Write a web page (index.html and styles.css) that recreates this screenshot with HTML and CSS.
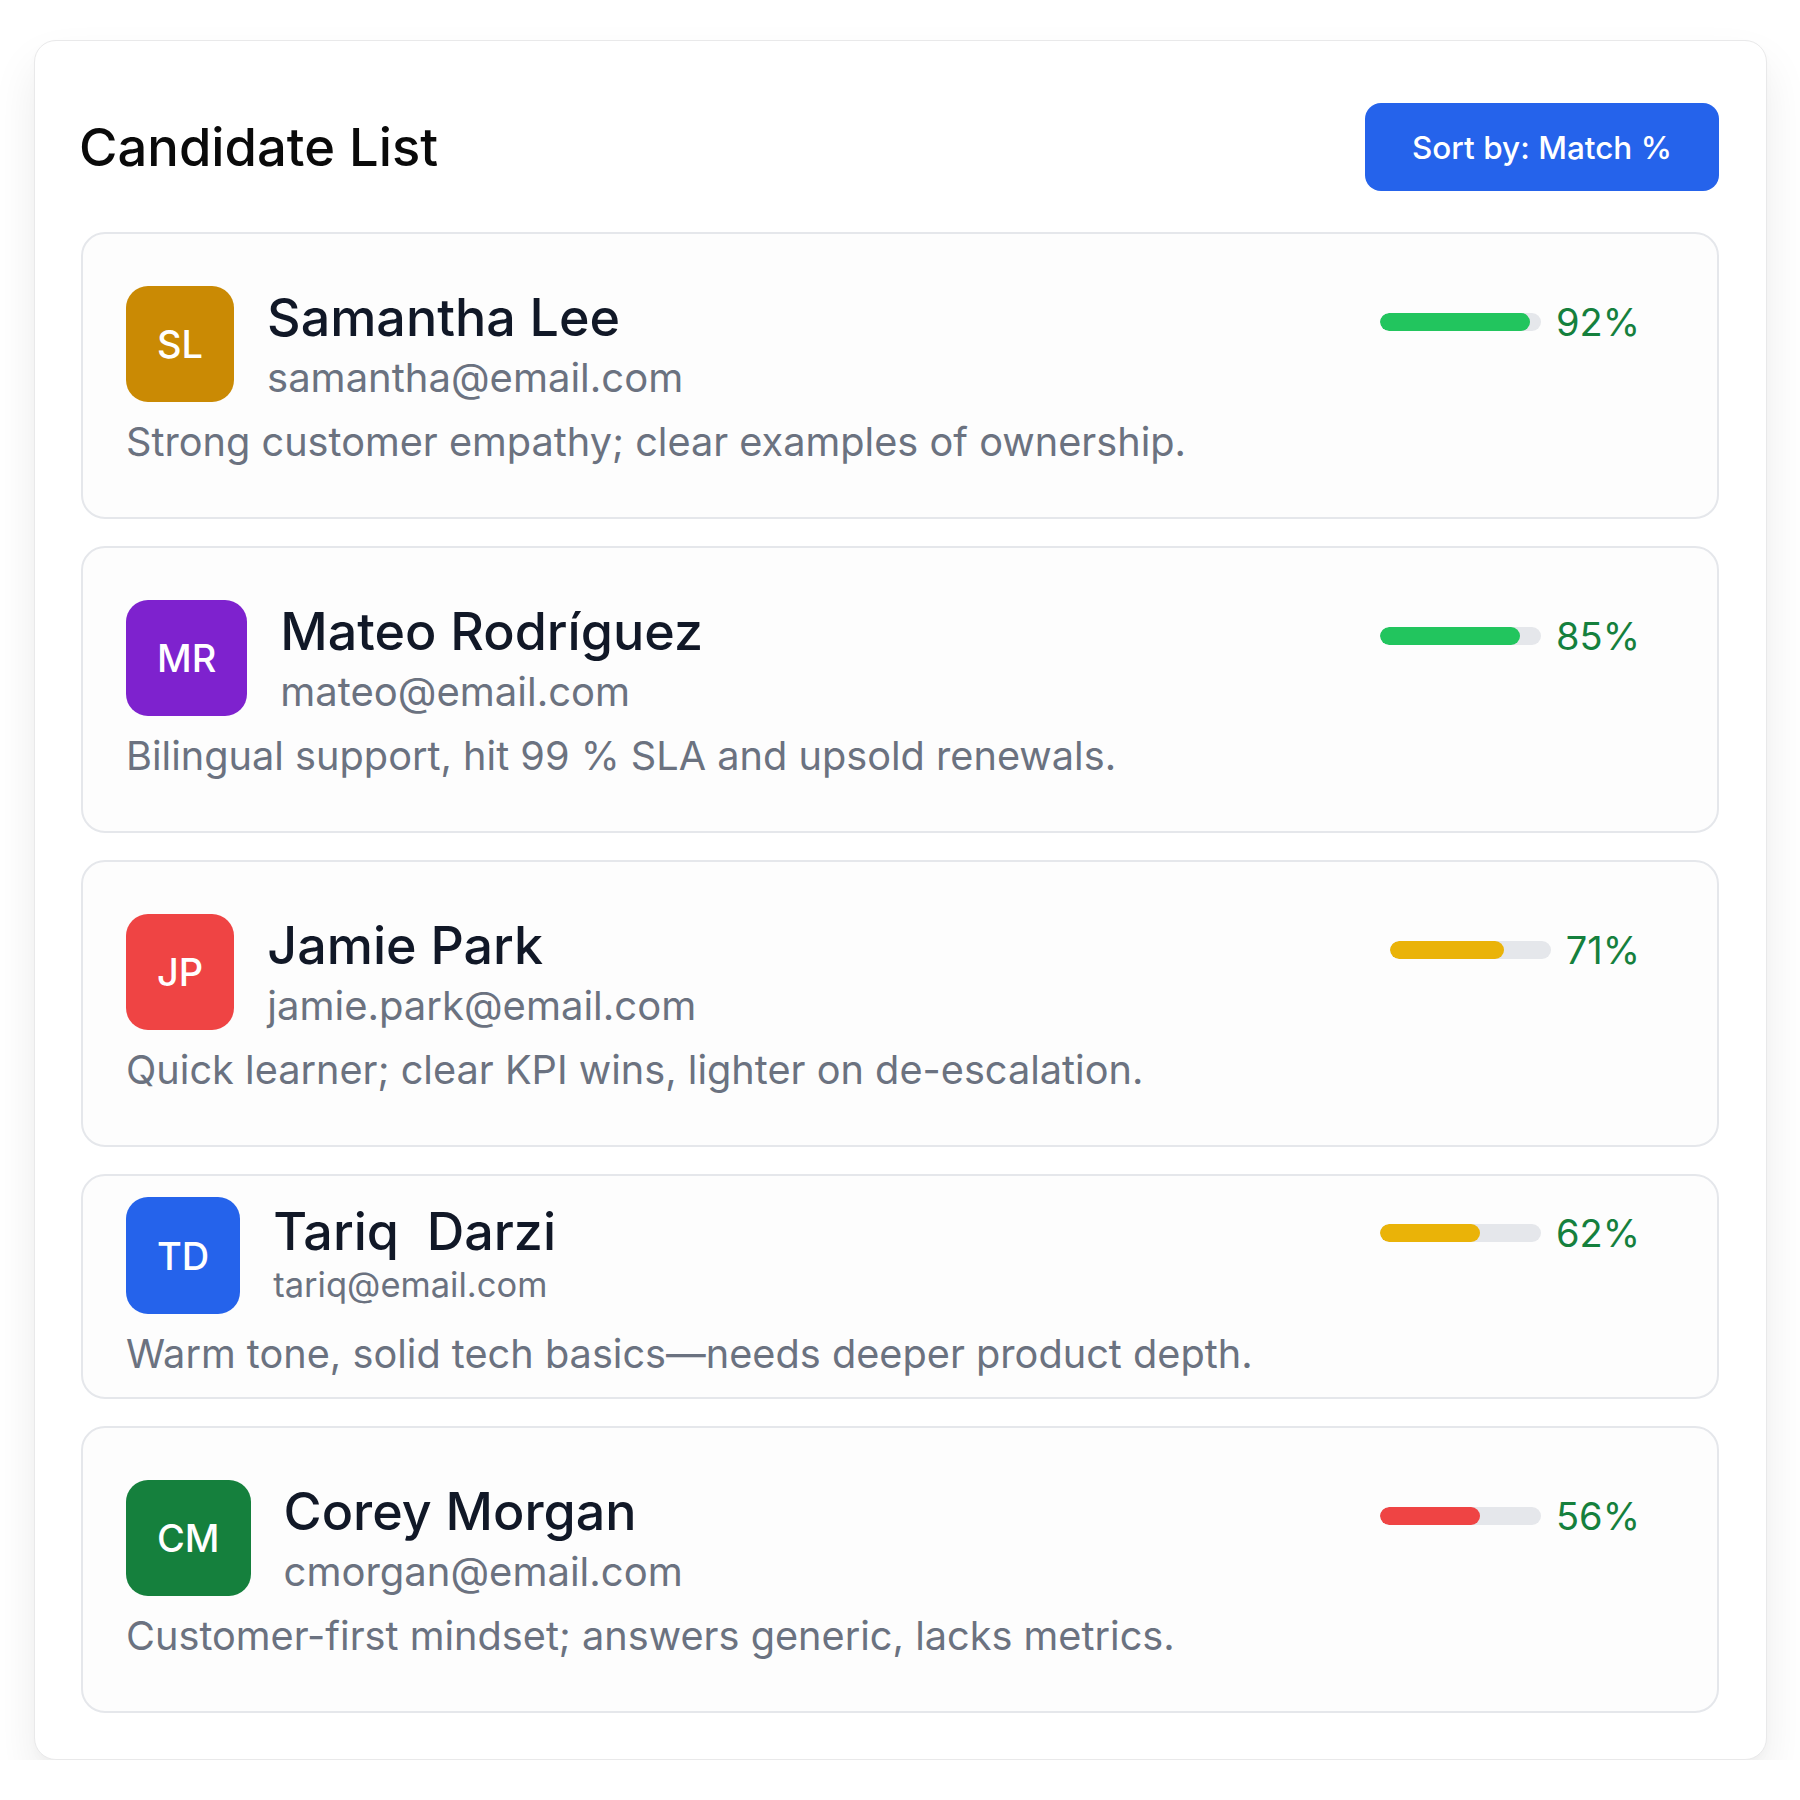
FILE: index.html
```html
<!DOCTYPE html>
<html lang="en">
<head>
<meta charset="utf-8">
<title>Candidate List</title>
<link rel="stylesheet" href="styles.css">
</head>
<body>
<section class="panel">
  <header class="panel-head">
    <h1 class="panel-title">Candidate List</h1>
    <button class="sort-btn" type="button">Sort by: Match %</button>
  </header>
  <div class="list">
    <article class="cand">
      <div class="cand-head">
        <div class="avatar av-sl">SL</div>
        <div class="info">
          <div class="name">Samantha Lee</div>
          <div class="email">samantha@email.com</div>
        </div>
        <div class="score">
          <div class="track"><div class="fill fill-green" style="width:93%"></div></div>
          <span class="pct">92%</span>
        </div>
      </div>
      <p class="note">Strong customer empathy; clear examples of ownership.</p>
    </article>
    <article class="cand">
      <div class="cand-head">
        <div class="avatar av-mr">MR</div>
        <div class="info">
          <div class="name">Mateo Rodríguez</div>
          <div class="email">mateo@email.com</div>
        </div>
        <div class="score">
          <div class="track"><div class="fill fill-green" style="width:87%"></div></div>
          <span class="pct">85%</span>
        </div>
      </div>
      <p class="note">Bilingual support, hit 99 % SLA and upsold renewals.</p>
    </article>
    <article class="cand">
      <div class="cand-head">
        <div class="avatar av-jp">JP</div>
        <div class="info">
          <div class="name">Jamie Park</div>
          <div class="email">jamie.park@email.com</div>
        </div>
        <div class="score">
          <div class="track"><div class="fill fill-yellow" style="width:71%"></div></div>
          <span class="pct">71%</span>
        </div>
      </div>
      <p class="note">Quick learner; clear KPI wins, lighter on de-escalation.</p>
    </article>
    <article class="cand cand-compact">
      <div class="cand-head">
        <div class="avatar av-td">TD</div>
        <div class="info">
          <div class="name">Tariq&nbsp; Darzi</div>
          <div class="email email-sm">tariq@email.com</div>
        </div>
        <div class="score">
          <div class="track"><div class="fill fill-yellow" style="width:62%"></div></div>
          <span class="pct">62%</span>
        </div>
      </div>
      <p class="note">Warm tone, solid tech basics—needs deeper product depth.</p>
    </article>
    <article class="cand">
      <div class="cand-head">
        <div class="avatar av-cm">CM</div>
        <div class="info">
          <div class="name">Corey Morgan</div>
          <div class="email">cmorgan@email.com</div>
        </div>
        <div class="score">
          <div class="track"><div class="fill fill-red" style="width:62%"></div></div>
          <span class="pct">56%</span>
        </div>
      </div>
      <p class="note">Customer-first mindset; answers generic, lacks metrics.</p>
    </article>
  </div>
</section>
</body>
</html>
```

FILE: styles.css
```css
* {
  box-sizing: border-box;
}

html, body {
  margin: 0;
  padding: 0;
  background: #ffffff;
}

body {
  font-family: Inter, "Noto Sans", "DejaVu Sans", sans-serif;
  color: #111827;
}

.panel {
  margin: 40px 33px 0 34px;
  padding: 62px 47px 46px 46px;
  background: #ffffff;
  border: 1px solid #e9e9ea;
  border-radius: 22px;
  box-shadow: 0 24px 46px rgba(0, 0, 0, 0.08), 0 4px 10px rgba(0, 0, 0, 0.02);
}

.panel-head {
  display: flex;
  align-items: center;
  justify-content: space-between;
  margin-bottom: 41px;
}

.panel-title {
  margin: 0 0 0 -2px;
  font-size: 52.5px;
  font-weight: 500;
  color: #0a0a0a;
  line-height: 1.2;
}

.sort-btn {
  height: 88px;
  padding: 0 47px;
  border: none;
  border-radius: 16px;
  background: #2563eb;
  color: #ffffff;
  font-family: Inter, "Noto Sans", sans-serif;
  font-size: 31.5px;
  font-weight: 500;
}

.list {
  display: flex;
  flex-direction: column;
  gap: 27px;
}

.cand {
  border: 2px solid #e5e7eb;
  border-radius: 24px;
  background: #fdfdfd;
  padding: 52px 44px 52px 43px;
}

.cand-compact {
  padding-top: 21px;
  padding-bottom: 20px;
}

.cand-head {
  display: flex;
  align-items: flex-start;
  gap: 33px;
}

.avatar {
  height: 116px;
  padding: 0 31px;
  border-radius: 22px;
  display: flex;
  align-items: center;
  justify-content: center;
  color: #ffffff;
  font-size: 38px;
  font-weight: 500;
  flex-shrink: 0;
}

.cand-compact .avatar {
  height: 117px;
  padding: 0 31px;
}

.av-sl { background: #ca8a04; }
.av-mr { background: #7e22ce; }
.av-jp { background: #ef4444; }
.av-td { background: #2563eb; }
.av-cm { background: #15803d; }

.info {
  flex: 1;
  display: flex;
  flex-direction: column;
  gap: 5px;
}

.cand-compact .info {
  gap: 0;
  padding-top: 3px;
}

.name {
  font-size: 52px;
  font-weight: 500;
  line-height: 63px;
  color: #111827;
}

.email {
  font-size: 40px;
  line-height: 48px;
  color: #6b7280;
}

.email-sm {
  font-size: 34.5px;
  line-height: 44px;
}

.score {
  display: flex;
  align-items: center;
  gap: 15px;
  margin-top: 11px;
  margin-right: 33px;
}

.track {
  width: 161px;
  height: 18px;
  border-radius: 9px;
  background: #e5e7eb;
  overflow: hidden;
}

.fill {
  height: 100%;
  border-radius: 9px;
}

.fill-green { background: #22c55e; }
.fill-yellow { background: #eab308; }
.fill-red { background: #ef4444; }

.pct {
  font-size: 38px;
  line-height: 50px;
  color: #15803d;
}

.note {
  margin: 17px 0 0 0;
  font-size: 39.7px;
  line-height: 46px;
  color: #6b7280;
}
```
